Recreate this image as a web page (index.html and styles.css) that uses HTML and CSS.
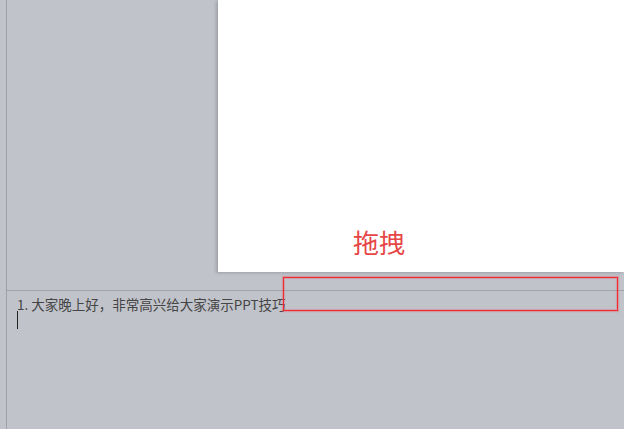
FILE: index.html
```html
<!DOCTYPE html>
<html lang="zh-CN">
  <head>
    <meta charset="UTF-8" />
    <meta name="viewport" content="width=device-width, initial-scale=1.0" />
    <title>拖拽</title>
    <link rel="stylesheet" href="styles.css">
  </head>
  <body>
    <div class="app">
      <div class="side-strip"></div>
      <div class="workspace">
        <div class="slide-pane">
          <div class="slide">
            <span class="slide-label">拖拽</span>
          </div>
        </div>
        <div class="notes-pane">
          <p class="note-line">1. 大家晚上好，非常高兴给大家演示PPT技巧</p>
          <span class="caret"></span>
        </div>
        <!-- drag marker -->
        <div class="drag-box"></div>
      </div>
    </div>
  </body>
</html>
```

FILE: styles.css
```css
html,
body {
  margin: 0;
  padding: 0;
  height: 100%;
}

body {
  background-color: #c1c3cb;
  font-family: "Noto Sans CJK SC", "Noto Sans", sans-serif;
  overflow: hidden;
}

.app {
  display: flex;
  height: 429px;
}

.side-strip {
  width: 6px;
  border-right: 1px solid #9ea0a8;
  flex-shrink: 0;
}

.workspace {
  position: relative;
  flex: 1;
  display: flex;
  flex-direction: column;
}

.slide-pane {
  height: 290px;
  display: flex;
  justify-content: flex-end;
  align-items: flex-start;
}

.slide {
  position: relative;
  width: 406px;
  height: 272px;
  background-color: #fff;
  box-shadow: -2px 1px 3px rgba(0, 0, 0, 0.18);
}

.slide-label {
  position: absolute;
  left: 135px;
  top: 226px;
  font-size: 26px;
  line-height: 32px;
  color: #e64646;
}

.notes-pane {
  flex: 1;
  border-top: 1px solid #a2a4ac;
  padding: 4px 0 0 10px;
}

.note-line {
  margin: 0;
  font-size: 13.5px;
  line-height: 18px;
  color: #454545;
}

.caret {
  display: block;
  width: 1px;
  height: 18px;
  margin-top: -2px;
  background-color: #222;
}

.drag-box {
  position: absolute;
  z-index: 5;
  left: 276px;
  top: 277px;
  width: 333px;
  height: 32px;
  border: 1px solid #ee2a30;
  box-shadow: 0 0 1px 1px rgba(238, 80, 90, 0.35), inset 0 0 1px 1px rgba(238, 80, 90, 0.3);
}
```
